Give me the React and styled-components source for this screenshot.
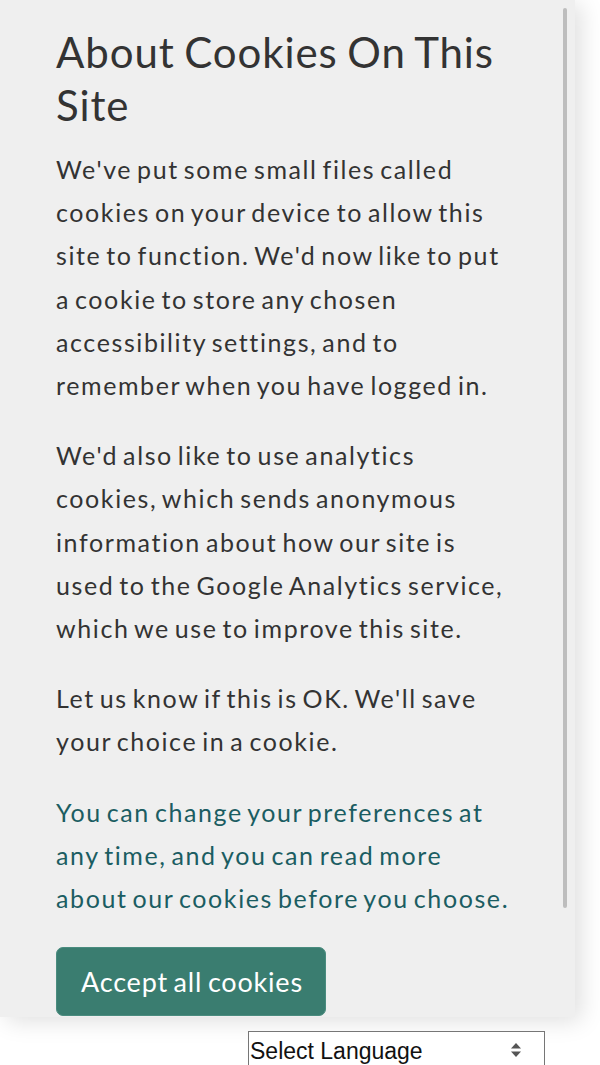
import styled, { createGlobalStyle } from "styled-components";

const GlobalStyle = createGlobalStyle`
  html, body {
    margin: 0;
    padding: 0;
    background: #ffffff;
  }
  * {
    box-sizing: border-box;
  }
`;

const Page = styled.div`
  width: 600px;
  height: 1065px;
  overflow: hidden;
  display: flex;
  flex-direction: column;
`;

const Banner = styled.section`
  position: relative;
  width: 575px;
  padding: 26px 56px 1px 56px;
  background: #efefef;
  box-shadow: 6px 4px 22px rgba(0, 0, 0, 0.13);
  font-family: Lato, "Open Sans", sans-serif;
  color: #333333;
`;

// thin overlay scroll indicator, like a mobile browser draws it
const ScrollThumb = styled.div`
  position: absolute;
  top: 8px;
  right: 8px;
  width: 4px;
  height: 900px;
  border-radius: 2px;
  background: #bdbdbd;
`;

const Title = styled.h2`
  margin: 0 0 16px;
  font-size: 42px;
  font-weight: 400;
  line-height: 53px;
  letter-spacing: 0.9px;
  word-spacing: -2px;
  white-space: nowrap;
`;

const Para = styled.p`
  margin: 0 0 27px;
  font-size: 25px;
  line-height: 43.2px;
  letter-spacing: 1.6px;
  word-spacing: -3px;
  white-space: nowrap;
  color: ${(p) => (p.$accent ? "#1b5d62" : "#333333")};
`;

const InlineLink = styled.a`
  color: inherit;
  text-decoration: none;
`;

const AcceptButton = styled.button`
  display: block;
  height: 69px;
  padding: 0 22px 0 24px;
  border: 1px solid #4a8c7f;
  border-radius: 7px;
  background: #3a7d70;
  color: #ffffff;
  font-family: Lato, "Open Sans", sans-serif;
  font-size: 27px;
  letter-spacing: 0.8px;
  word-spacing: -2px;
  cursor: pointer;
`;

const LanguageRow = styled.div`
  display: flex;
  padding: 14px 0 0 248px;
`;

const SelectWrap = styled.div`
  position: relative;
  width: 297px;
`;

const LanguageSelect = styled.select`
  appearance: none;
  width: 100%;
  height: 36px;
  padding: 4px 30px 0 1px;
  border: 1px solid #767676;
  border-radius: 0;
  background: #ffffff;
  color: #111111;
  font-family: "Liberation Sans", Arial, sans-serif;
  font-size: 23px;
`;

const SelectArrows = styled.svg`
  position: absolute;
  top: 11px;
  left: 262px;
  pointer-events: none;
`;

const Para1 = [
  "We've put some small files called",
  "cookies on your device to allow this",
  "site to function. We'd now like to put",
  "a cookie to store any chosen",
  "accessibility settings, and to",
  "remember when you have logged in.",
];

const Para2 = [
  "We'd also like to use analytics",
  "cookies, which sends anonymous",
  "information about how our site is",
  "used to the Google Analytics service,",
  "which we use to improve this site.",
];

const Para3 = ["Let us know if this is OK. We'll save", "your choice in a cookie."];

const lines = (arr) =>
  arr.map((l, i) => (
    <span key={i}>
      {l}
      {i < arr.length - 1 && <br />}
    </span>
  ));

const App = () => {
  return (
    <>
      <GlobalStyle />
      <Page>
        <Banner>
          <ScrollThumb />
          <Title>
            About Cookies On This
            <br />
            Site
          </Title>
          <Para>{lines(Para1)}</Para>
          <Para>{lines(Para2)}</Para>
          <Para>{lines(Para3)}</Para>
          <Para $accent>
            You can change your preferences at
            <br />
            any time, and you can <InlineLink href="#">read more</InlineLink>
            <br />
            <InlineLink href="#">about our cookies</InlineLink> before you choose.
          </Para>
          <AcceptButton>Accept all cookies</AcceptButton>
        </Banner>
        <LanguageRow>
          <SelectWrap>
            <LanguageSelect defaultValue="">
              <option value="">Select Language</option>
              <option value="fr">French</option>
              <option value="de">German</option>
            </LanguageSelect>
            <SelectArrows width="12" height="16" viewBox="0 0 12 16">
              <path d="M6 1 L11 6.5 H1 Z" fill="#555" />
              <path d="M6 15 L11 9.5 H1 Z" fill="#555" />
            </SelectArrows>
          </SelectWrap>
        </LanguageRow>
      </Page>
    </>
  );
};

export default App;
